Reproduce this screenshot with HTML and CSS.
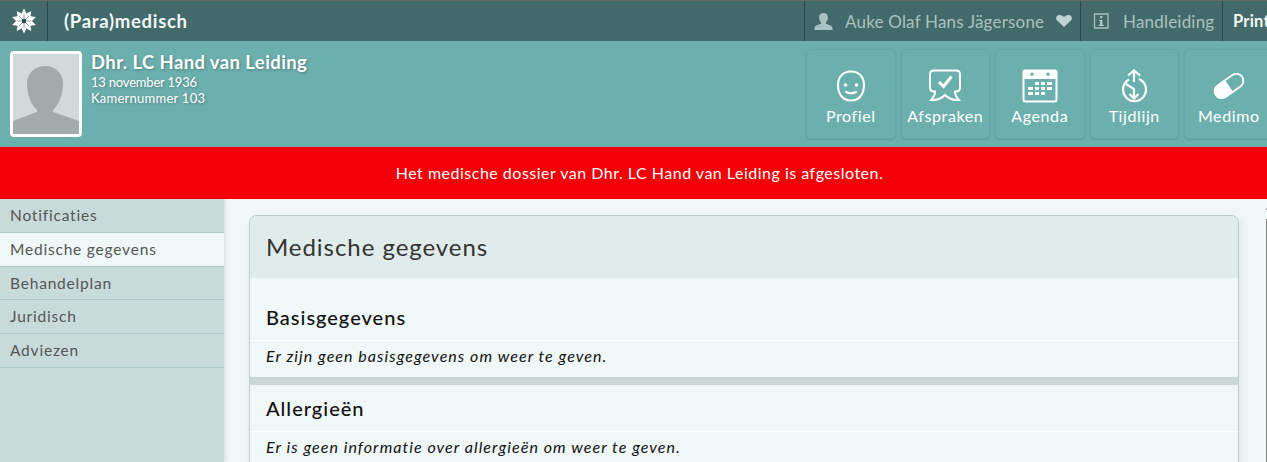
FILE: index.html
```html
<!DOCTYPE html>
<html lang="nl">
<head>
    <meta charset="UTF-8">
    <meta name="viewport" content="width=device-width, initial-scale=1.0">
    <title>(Para)medisch</title>
    <link rel="stylesheet" href="styles.css">
</head>
<body>
    <div class="topbar">
        <div class="logo">
            <svg width="26" height="26" viewBox="0 0 26 26">
                <polygon fill="#fff" points="13,0.500 15.500,5.400 20.300,2.900 19.500,8.300 24.900,9.100 21,13 24.900,16.900 19.500,17.700 20.300,23.100 15.500,20.600 13,25.500 10.500,20.600 5.700,23.100 6.500,17.700 1.100,16.900 5,13 1.100,9.100 6.500,8.300 5.700,2.900 10.500,5.400"/>
                <path d="M13 6v4M13 16v4M6 13h4M16 13h4M8 8l3 3M15 15l3 3M18 8l-3 3M11 15l-3 3" stroke="#8aa5a5" stroke-width="1"/>
                <circle cx="13" cy="13" r="2.400" fill="#2c4b4b"/>
            </svg>
        </div>
        <div class="app-title">(Para)medisch</div>
        <div class="top-item user">
            <svg width="19" height="17" viewBox="0 0 19 17"><path fill="#a9c1c0" d="M9.500 0c2.800 0 4.400 2 4.400 4.700 0 2-.9 3.700-2 4.600v1.500c1.500.8 6.600 1.500 6.600 4.200v2H.500v-2c0-2.700 5.100-3.400 6.600-4.200V9.300c-1.100-.9-2-2.600-2-4.600C5.100 2 6.700 0 9.500 0z"/></svg>
            <span class="user-name">Auke Olaf Hans Jägersone</span>
            <svg width="16" height="12" viewBox="0 0 16 12"><path fill="#c0d3d2" d="M8 12 1 5.500C-.7 3.500.2.200 3.500.1 5.500 0 7 1 8 2.200 9 1 10.500 0 12.500.1c3.300.1 4.200 3.400 2.500 5.400z"/></svg>
        </div>
        <div class="top-item manual">
            <svg width="16" height="16" viewBox="0 0 16 16"><path fill="none" stroke="#a9c1c0" stroke-width="1.300" d="M1.500 1h13.500v14H1.500z"/><path stroke="#b5cbca" stroke-width="2.200" d="M8.200 3v2.200M8.200 7v5"/><path stroke="#b5cbca" stroke-width="1.200" d="M6 7.500h2.500M5.800 12.400h5"/></svg>
            <span>Handleiding</span>
        </div>
        <div class="top-item print">Print</div>
    </div>

    <div class="patient">
        <div class="photo">
            <svg width="66" height="80" viewBox="0 0 66 80">
                <rect width="66" height="80" fill="#d3d8d9"/>
                <path fill="#a4a9a9" d="M32 12c10 0 18 7 18 17 0 11-4 22-10 27v2l26 9v13H0V67l24-9v-2c-6-5-10-16-10-27 0-10 8-17 18-17z"/>
            </svg>
        </div>
        <div class="patient-info">
            <div class="patient-name">Dhr. LC Hand van Leiding</div>
            <div class="patient-line date">13 november 1936</div>
            <div class="patient-line room">Kamernummer 103</div>
        </div>
        <div class="tiles">
            <a class="tile">
                <svg width="34" height="34" viewBox="0 0 34 34"><g fill="none" stroke="#fff" stroke-width="2"><path d="M17 2.500c8 0 13 5.500 13 13.500 0 10-5.500 15.500-13 15.500S4 26 4 16C4 8 9 2.500 17 2.500z"/><path stroke-linecap="round" d="M12 23c3 1.500 7 1.500 10 0"/></g><circle cx="11.500" cy="16" r="1.800" fill="#fff"/><circle cx="22.500" cy="16" r="1.800" fill="#fff"/></svg>
                <span>Profiel</span>
            </a>
            <a class="tile">
                <svg width="34" height="34" viewBox="0 0 34 34"><path fill="none" stroke="#fff" stroke-width="2" d="M6 1.500h22c2.500 0 4 1.500 4 4v13c0 2.500-1.500 4-4 4h-1c0 3 1.500 6 4 8.500-5 .5-10-1-14-5-4 4-9 5.500-14 5 2.500-2.500 4-5.500 4-8.500H6c-2.500 0-4-1.500-4-4v-13c0-2.500 1.500-4 4-4z"/><path fill="none" stroke="#fff" stroke-width="3" d="M11 13l4.500 4.500 8-10"/></svg>
                <span>Afspraken</span>
            </a>
            <a class="tile">
                <svg width="36" height="34" viewBox="0 0 36 34"><path fill="#fff" fill-rule="evenodd" d="M3 .500h30c1.500 0 2.500 1 2.500 2.500v28c0 1.500-1 2.500-2.500 2.500H3c-1.500 0-2.500-1-2.500-2.500V3C.500 1.500 1.500.500 3 .500zM2.500 10v20.500c0 .6.400 1 1 1h29c.6 0 1-.4 1-1V10zM10 3.500a1.800 1.800 0 1 0 0 3.600 1.800 1.800 0 0 0 0-3.600zm16 0a1.800 1.800 0 1 0 0 3.600 1.800 1.800 0 0 0 0-3.600z"/><path fill="#fff" d="M13 13h4v3h-4zM19 13h4v3h-4zM25 13h5v3h-5zM6 18h5v3H6zM13 18h4v3h-4zM19 18h4v3h-4zM25 18h5v3h-5zM6 23h5v3H6zM13 23h4v3h-4zM19 23h4v3h-4z"/></svg>
                <span>Agenda</span>
            </a>
            <a class="tile">
                <svg width="26" height="34" viewBox="0 0 26 34"><g fill="none" stroke="#fff" stroke-width="2.200"><path d="M8 10.500A11.500 11.500 0 1 0 18 10"/><path d="M7 6.500 13 1.500 19 6.500M13 2v11M5 15l8 5v9M8.500 25l4.500 4.500 4.500-4.500"/></g></svg>
                <span>Tijdlijn</span>
            </a>
            <a class="tile">
                <svg width="34" height="34" viewBox="0 0 34 34"><g transform="rotate(-35 17 17)"><rect x="1" y="10" width="32" height="14" rx="7" fill="none" stroke="#fff" stroke-width="1.800"/><path fill="#fff" d="M17 10H8a7 7 0 0 0 0 14h9z"/></g></svg>
                <span>Medimo</span>
            </a>
        </div>
    </div>

    <div class="alert">Het medische dossier van Dhr. LC Hand van Leiding is afgesloten.</div>

    <div class="main">
        <ul class="sidebar">
            <li>Notificaties</li>
            <li class="active">Medische gegevens</li>
            <li>Behandelplan</li>
            <li>Juridisch</li>
            <li>Adviezen</li>
        </ul>
        <div class="content">
            <div class="panel">
                <h1 class="panel-title">Medische gegevens</h1>
                <div class="section">
                    <h2>Basisgegevens</h2>
                    <p>Er zijn geen basisgegevens om weer te geven.</p>
                </div>
                <div class="section">
                    <h2>Allergieën</h2>
                    <p>Er is geen informatie over allergieën om weer te geven.</p>
                </div>
            </div>
        </div>
        <div class="edge"></div>
    </div>
</body>
</html>
```

FILE: styles.css
```css
html, body {
    height: 462px;
    overflow: hidden;
}
body {
    margin: 0;
    font-family: "Lato", "Open Sans", sans-serif;
    background-color: #eff7f7;
    color: #333;
}
.topbar {
    display: flex;
    height: 40px;
    background-color: #426a6a;
    border-top: 1px solid #666;
    overflow: hidden;
}
.logo {
    flex: none;
    width: 47px;
    display: flex;
    align-items: center;
    justify-content: center;
    border-right: 1px solid #2c4b4b;
}
.app-title {
    flex: none;
    width: 740px;
    padding-left: 16px;
    font-size: 18.500px;
    font-weight: 700;
    letter-spacing: 0.7px;
    line-height: 40px;
    color: #f2f7f7;
}
.top-item {
    flex: none;
    display: flex;
    align-items: center;
    box-sizing: border-box;
    border-left: 1px solid #2c4b4b;
    color: #a9c1c0;
    font-size: 17px;
    letter-spacing: 0.2px;
}
.user {
    width: 276px;
    padding-left: 9px;
    gap: 12px;
}
.user-name {
    width: 199px;
    white-space: nowrap;
}
.manual {
    width: 142px;
    padding-left: 12px;
    gap: 14px;
}
.print {
    padding-left: 10px;
    color: #f2f7f7;
    font-weight: 700;
    font-size: 16.500px;
}
.patient {
    display: flex;
    height: 106px;
    background-color: #6cb0ae;
    overflow: hidden;
}
.photo {
    flex: none;
    align-self: flex-start;
    margin: 10px 0 0 10px;
    border: 3px solid #fff;
    border-radius: 4px;
    font-size: 0;
}
.patient-info {
    flex: none;
    width: 715px;
    padding: 9px 0 0 9px;
    color: #fff;
    text-shadow: 1px 1px 3px rgba(0, 0, 0, 0.3);
}
.patient-name {
    font-size: 18.500px;
    font-weight: 700;
    letter-spacing: 0.4px;
    line-height: 25px;
}
.patient-line {
    font-size: 13px;
    line-height: 15.500px;
}
.date {
    letter-spacing: -0.2px;
}
.room {
    letter-spacing: 0.25px;
}
.tiles {
    flex: none;
    display: flex;
    gap: 5px;
    padding-top: 8px;
}
.tile {
    flex: none;
    box-sizing: border-box;
    width: 89.500px;
    height: 90px;
    padding-top: 19px;
    display: flex;
    flex-direction: column;
    align-items: center;
    gap: 3px;
    border: 1px solid #66a8a6;
    border-radius: 5px;
    box-shadow: 0 1px 2px rgba(0, 0, 0, 0.14);
    color: #fff;
    font-size: 16px;
    letter-spacing: 0.6px;
}
.tile svg {
    height: 34px;
}
.alert {
    height: 52px;
    line-height: 52px;
    padding-left: 12px;
    text-align: center;
    background-color: #f60007;
    color: #fff;
    font-size: 16px;
    letter-spacing: 0.5px;
}
.main {
    display: flex;
    height: 263px;
}
.sidebar {
    flex: none;
    width: 224px;
    margin: 0;
    padding: 0;
    list-style: none;
    background-color: #c8dbd9;
    box-shadow: 1px 0 4px rgba(0, 0, 0, 0.12);
}
.sidebar li {
    height: 32.750px;
    line-height: 32.750px;
    padding-left: 10px;
    border-bottom: 1px solid #aecac8;
    color: #555;
    font-size: 15.500px;
    letter-spacing: 0.8px;
}
.sidebar .active {
    background-color: #eff7f7;
}
.content {
    flex: 1;
    padding: 16px 27px 0 25px;
    overflow: hidden;
}
.panel {
    background-color: #eff7f7;
    border: 1px solid #b9cdca;
    border-radius: 8px 8px 0 0;
    box-shadow: 2px 2px 8px rgba(0, 0, 0, 0.08);
}
.panel-title {
    margin: 0;
    height: 62px;
    padding-left: 16px;
    line-height: 62px;
    border-radius: 8px 8px 0 0;
    background-color: #dfecea;
    font-size: 24px;
    font-weight: 400;
    letter-spacing: 0.95px;
    color: #333;
}
.section {
    padding-top: 24px;
    border-bottom: 8px solid #c8d6d4;
}
.section + .section {
    padding-top: 8px;
    border-bottom: 0;
}
.section h2 {
    margin: 0;
    height: 39px;
    padding-left: 16px;
    line-height: 31px;
    font-size: 20px;
    font-weight: 500;
    letter-spacing: 1px;
    color: #111;
    border-bottom: 1px solid #fff;
    box-sizing: border-box;
}
.section p {
    margin: 0;
    height: 36px;
    padding-left: 16px;
    line-height: 29px;
    font-size: 16px;
    font-style: italic;
    letter-spacing: 1.050px;
    color: #111;
}
.edge {
    flex: none;
    width: 1px;
}
.edge::before {
    content: "";
    display: block;
    height: 2px;
    margin-top: 9px;
    background-color: #aaa;
}
.edge::after {
    content: "";
    display: block;
    height: 100%;
    margin-top: 9px;
    background-color: #888;
}
```
